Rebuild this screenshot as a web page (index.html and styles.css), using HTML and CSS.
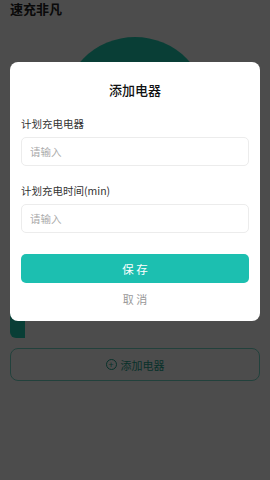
FILE: index.html
```html
<!DOCTYPE html>
<html lang="zh">
<head>
  <meta charset="UTF-8" />
  <meta name="viewport" content="width=device-width, initial-scale=1.0" />
  <title>速充非凡</title>
  <link rel="stylesheet" href="styles.css">
</head>
<body>

<div class="page">
  <h1 class="app-title">速充非凡</h1>
  <div class="ring"></div>
  <div class="device-card"><div class="device-bar"></div></div>
  <button class="add-btn"><span class="plus-icon">+</span>添加电器</button>
</div>

<div class="mask"></div>

<div class="modal">
  <h2 class="modal-title">添加电器</h2>
  <label class="field-label">计划充电电器</label>
  <input class="field-input" type="text" placeholder="请输入" />
  <label class="field-label">计划充电时间(min)</label>
  <input class="field-input" type="text" placeholder="请输入" />
  <button class="save-btn">保 存</button>
  <div class="cancel-btn">取 消</div>
</div>

</body>
</html>
```

FILE: styles.css
```css
body {
  font-family: "Noto Sans CJK SC", "Noto Sans", sans-serif;
  background-color: #f4f4f4;
  margin: 0;
  padding: 0;
  color: #222;
}

.page {
  padding: 0 10px;
}

.app-title {
  margin: 0;
  font-size: 13px;
  line-height: 18px;
  font-weight: bold;
}

.ring {
  width: 146px;
  height: 146px;
  margin: 19px auto 0;
  border-radius: 50%;
  background-color: #1fc9ad;
}

.device-card {
  height: 138px;
  margin-top: 17px;
}

.device-bar {
  width: 15px;
  height: 100%;
  background-color: #1fc9ad;
  border-radius: 0 0 0 6px;
}

.add-btn {
  display: flex;
  align-items: center;
  justify-content: center;
  gap: 4px;
  width: 100%;
  height: 33px;
  margin-top: 10px;
  border: 1px solid #6fd3c2;
  border-radius: 8px;
  background: transparent;
  color: #1a9e89;
  font-family: inherit;
  font-size: 11px;
}

.plus-icon {
  display: inline-flex;
  align-items: center;
  justify-content: center;
  width: 9px;
  height: 9px;
  border: 1px solid #1a9e89;
  border-radius: 50%;
  font-size: 9px;
  line-height: 1;
}

.mask {
  position: fixed;
  top: 0;
  right: 0;
  bottom: 0;
  left: 0;
  background-color: rgba(0, 0, 0, 0.69);
}

.modal {
  position: fixed;
  top: 62px;
  left: 10px;
  right: 10px;
  display: flex;
  flex-direction: column;
  padding: 18px 11px 14px;
  background-color: #fff;
  border-radius: 8px;
}

.modal-title {
  margin: 0 0 16px;
  text-align: center;
  font-size: 13px;
  line-height: 20px;
  font-weight: 500;
  color: #111;
}

.field-label {
  font-size: 10.5px;
  line-height: 16px;
  color: #333;
  margin-bottom: 5px;
}

.field-input {
  height: 29px;
  box-sizing: border-box;
  padding: 0 8px;
  border: 1px solid #ececec;
  border-radius: 5px;
  font-family: inherit;
  font-size: 10.5px;
  color: #333;
  margin-bottom: 17px;
  outline: none;
}

.field-input::placeholder {
  color: #aaa;
}

.field-input + .field-label + .field-input {
  margin-bottom: 21px;
}

.save-btn {
  height: 29px;
  border: none;
  border-radius: 5px;
  background-color: #1cbfb0;
  color: #fff;
  font-family: inherit;
  font-size: 11.5px;
}

.cancel-btn {
  margin-top: 8px;
  text-align: center;
  font-size: 11px;
  line-height: 16px;
  color: #999;
}
```
